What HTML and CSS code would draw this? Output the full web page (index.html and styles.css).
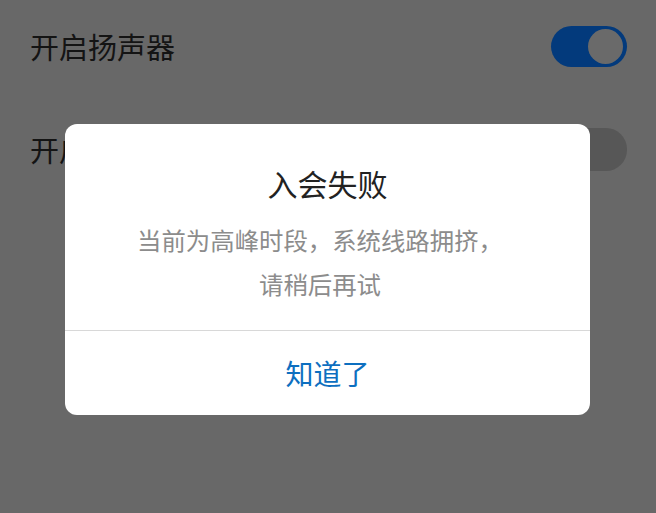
FILE: index.html
```html
<!DOCTYPE html>
<html lang="zh-CN">
<head>
<meta charset="utf-8">
<link rel="stylesheet" href="styles.css">
</head>
<body>
<div class="list">
  <div class="row">
    <span class="label">开启扬声器</span>
    <span class="toggle on"><span class="knob"></span></span>
  </div>
  <div class="row">
    <span class="label">开启视频</span>
    <span class="toggle off"></span>
  </div>
</div>
<div class="overlay">
  <div class="dialog">
    <div class="content">
      <div class="title">入会失败</div>
      <div class="message">当前为高峰时段，系统线路拥挤，<br>请稍后再试</div>
    </div>
    <div class="actions">
      <span class="button">知道了</span>
    </div>
  </div>
</div>
</body>
</html>
```
FILE: styles.css
```css
html, body {
  margin: 0;
  padding: 0;
}
body {
  width: 656px;
  height: 513px;
  background: #686868;
  font-family: "Noto Sans CJK SC", "Noto Sans", sans-serif;
  position: relative;
  overflow: hidden;
}
.list {
  display: flex;
  flex-direction: column;
  padding: 0 29px 0 30px;
}
.row {
  height: 92px;
  display: flex;
  align-items: center;
  justify-content: space-between;
}
.row + .row {
  margin-top: 11px;
}
.label {
  font-size: 29px;
  color: #141414;
  line-height: 40px;
}
.toggle {
  width: 76px;
  height: 41px;
  border-radius: 21px;
  display: flex;
  align-items: center;
  justify-content: flex-end;
  box-sizing: border-box;
}
.toggle.on {
  background: #033a7c;
  padding-right: 4px;
}
.toggle.off {
  background: #575757;
  height: 43px;
}
.knob {
  width: 35px;
  height: 35px;
  border-radius: 50%;
  background: #6a6a6a;
}
.overlay {
  position: absolute;
  inset: 0;
  display: flex;
  justify-content: center;
  align-items: center;
  padding-top: 26px;
  box-sizing: border-box;
}
.dialog {
  width: 525px;
  background: #ffffff;
  border-radius: 12px;
  display: flex;
  flex-direction: column;
  margin-left: -1px;
}
.content {
  padding: 39px 0 24px;
  display: flex;
  flex-direction: column;
  align-items: center;
  border-bottom: 1px solid #d8d8d8;
}
.title {
  font-size: 30px;
  line-height: 40px;
  color: #222222;
}
.message {
  margin-top: 15px;
  font-size: 24.4px;
  line-height: 44px;
  color: #8c8c8c;
  text-align: center;
  padding: 0 35px 0 20px;
}
.actions {
  height: 84px;
  display: flex;
  align-items: center;
  justify-content: center;
}
.button {
  font-size: 28px;
  line-height: 40px;
  color: #0d6fc0;
}
```
